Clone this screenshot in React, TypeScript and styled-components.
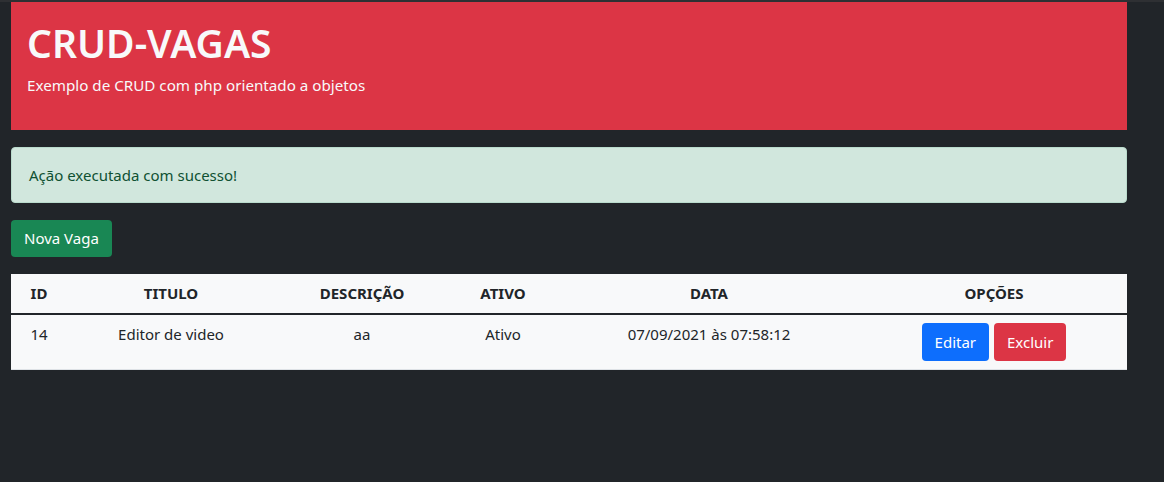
import React from "react";
import styled, { createGlobalStyle } from "styled-components";

const GlobalStyle = createGlobalStyle`
    body {
        margin: 0;
        background-color: #212529;
        border-top: 2px solid #2e3033;
        font-family: "Noto Sans", "Open Sans", sans-serif;
        font-size: 16px;
        line-height: 1.5;
        color: #212529;
    }
`;

const Container = styled.main`
    width: 1116px;
    padding-left: 11px;
    display: flex;
    flex-direction: column;
    gap: 17px;
`;

const Jumbotron = styled.section`
    height: 128px;
    box-sizing: border-box;
    background-color: #dc3545;
    color: #f8f9fa;
    padding: 18px 16px 16px;
`;

const Title = styled.h1`
    margin: 0 0 7px;
    font-size: 39px;
    font-weight: 600;
    line-height: 1.2;
`;

const Subtitle = styled.p`
    margin: 0;
    font-size: 15.2px;
`;

const Alert = styled.div`
    height: 56px;
    box-sizing: border-box;
    display: flex;
    align-items: center;
    padding: 0 17px;
    background-color: #d1e7dd;
    color: #0f5132;
    border: 1px solid #badbcc;
    border-radius: 4px;
    font-size: 15px;
`;

const Button = styled.button<{ $variant: "success" | "primary" | "danger" }>`
    font-family: inherit;
    font-size: 15px;
    line-height: 1.5;
    color: #fff;
    border: none;
    border-radius: 4px;
    padding: 0 13px;
    height: ${({ $variant }) => ($variant === "success" ? 37 : 38)}px;
    cursor: pointer;
    background-color: ${({ $variant }) =>
        $variant === "success" ? "#198754" : $variant === "primary" ? "#0d6efd" : "#dc3545"};
`;

const Toolbar = styled.div`
    display: flex;
`;

const Table = styled.table`
    width: 1116px;
    border-collapse: collapse;
    table-layout: fixed;
    background-color: #f8f9fa;
    font-size: 15px;
`;

const Th = styled.th<{ $width: number }>`
    box-sizing: border-box;
    width: ${({ $width }) => $width}px;
    height: 40px;
    padding: 0 8px;
    text-align: center;
    font-weight: 700;
    border-bottom: 2px solid #212529;
`;

const Td = styled.td`
    box-sizing: border-box;
    height: 55px;
    padding: 8px 8px 0;
    text-align: center;
    vertical-align: top;
    border-bottom: 1px solid #dee2e6;
`;

const Actions = styled.div`
    display: flex;
    justify-content: center;
    gap: 5px;
`;

const columns = [
    { label: "ID", width: 56 },
    { label: "TITULO", width: 208 },
    { label: "DESCRIÇÃO", width: 174 },
    { label: "ATIVO", width: 108 },
    { label: "DATA", width: 304 },
    { label: "OPÇÕES", width: 266 },
];

const vagas = [
    { id: 14, titulo: "Editor de video", descricao: "aa", ativo: "Ativo", data: "07/09/2021 às 07:58:12" },
];

export default function App() {
    return (
        <>
            <GlobalStyle />
            <Container>
                <Jumbotron>
                    <Title>CRUD-VAGAS</Title>
                    <Subtitle>Exemplo de CRUD com php orientado a objetos</Subtitle>
                </Jumbotron>
                <Alert>Ação executada com sucesso!</Alert>
                <Toolbar>
                    <Button $variant="success">Nova Vaga</Button>
                </Toolbar>
                <Table>
                    <thead>
                        <tr>
                            {columns.map((col) => (
                                <Th key={col.label} $width={col.width}>{col.label}</Th>
                            ))}
                        </tr>
                    </thead>
                    <tbody>
                        {vagas.map((vaga) => (
                            <tr key={vaga.id}>
                                <Td>{vaga.id}</Td>
                                <Td>{vaga.titulo}</Td>
                                <Td>{vaga.descricao}</Td>
                                <Td>{vaga.ativo}</Td>
                                <Td>{vaga.data}</Td>
                                <Td>
                                    <Actions>
                                        <Button $variant="primary">Editar</Button>
                                        <Button $variant="danger">Excluir</Button>
                                    </Actions>
                                </Td>
                            </tr>
                        ))}
                    </tbody>
                </Table>
            </Container>
        </>
    );
}
